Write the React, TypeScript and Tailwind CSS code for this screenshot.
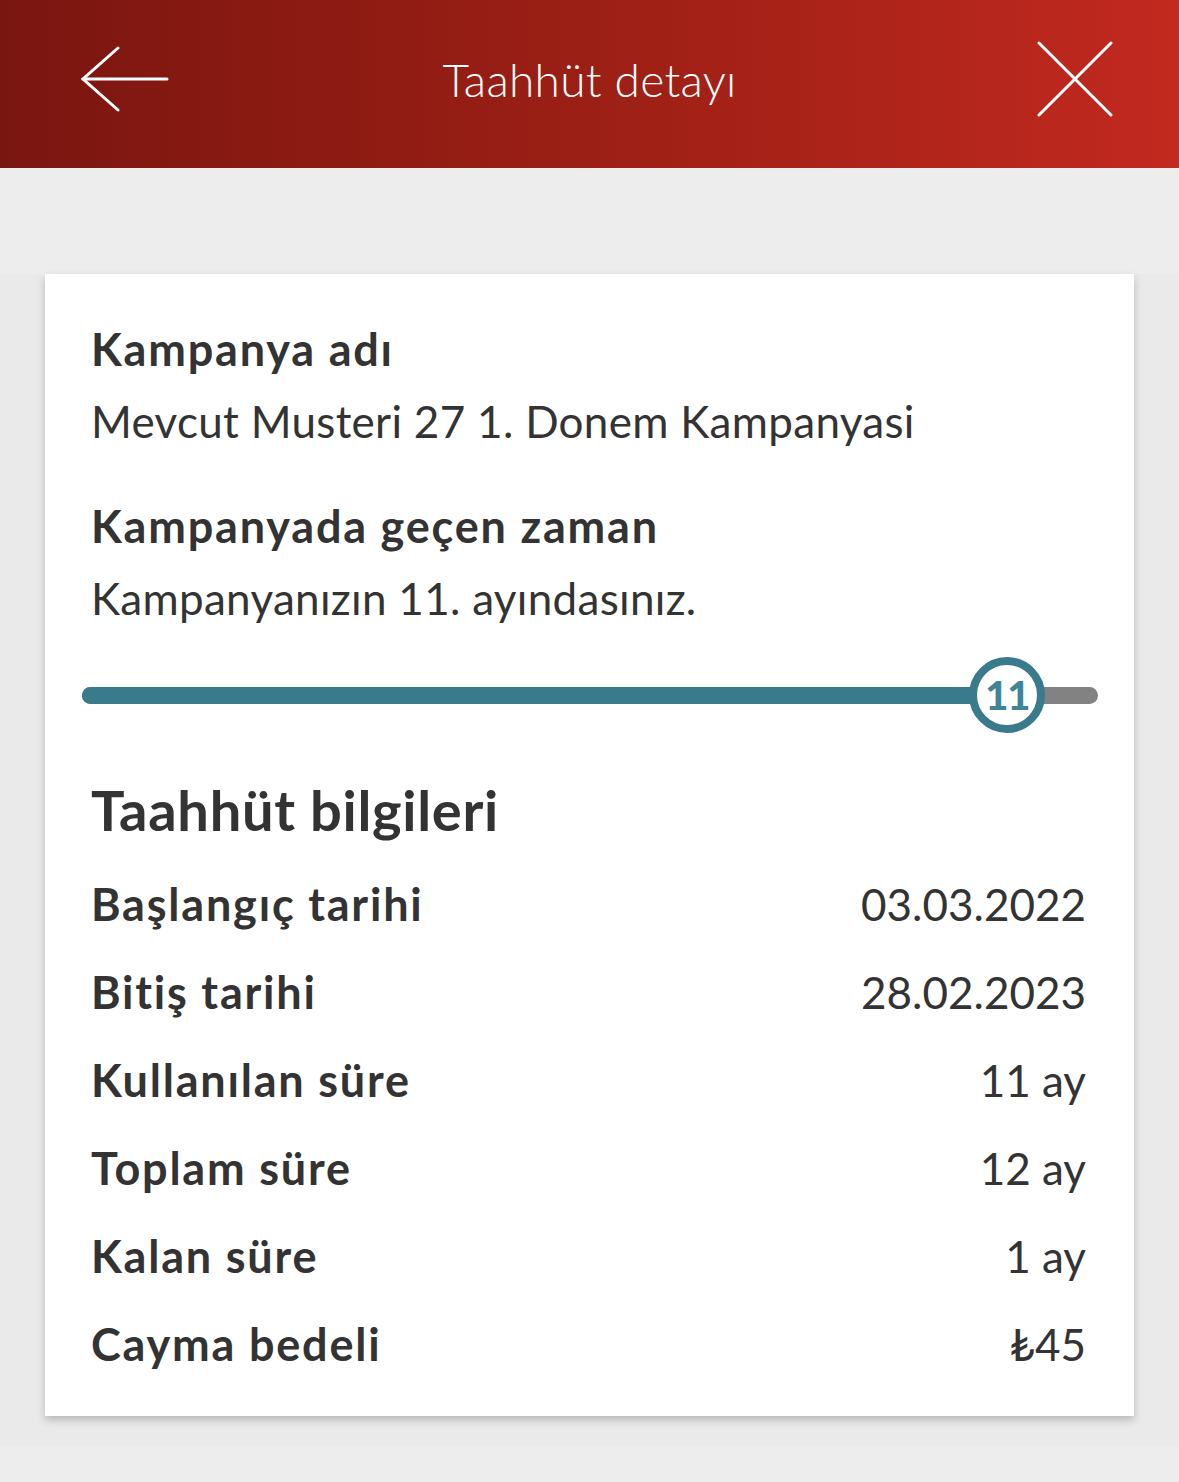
import { ReactNode } from "react";

const rows = [
  { label: "Başlangıç tarihi", value: "03.03.2022" },
  { label: "Bitiş tarihi", value: "28.02.2023" },
  { label: "Kullanılan süre", value: "11 ay" },
  { label: "Toplam süre", value: "12 ay" },
  { label: "Kalan süre", value: "1 ay" },
  { label: "Cayma bedeli", value: "₺45" },
];

const used = 11;
const total = 12;

function Label({ children, className = "" }: { children: ReactNode; className?: string }) {
  return (
    <div className={`h-[72px] text-[45px] leading-[72px] font-bold tracking-[1.8px] ${className}`}>{children}</div>
  );
}

function Value({ children }: { children: ReactNode }) {
  return <div className="h-[72px] text-[44px] leading-[72px] font-normal tracking-[0.3px]">{children}</div>;
}

function Progress() {
  const pct = (used / total) * 100;
  return (
    <div className="-ml-[9px] -mr-[12px] mt-[21px] h-[80px] flex items-center">
      <div className="relative w-full h-[17px] rounded-full bg-[#828282]">
        <div
          className="absolute left-0 top-0 h-full rounded-full bg-[#397a8c]"
          style={{ width: `calc(${pct}% - 6px)` }}
        />
        <div
          className="absolute top-1/2 -translate-x-1/2 -translate-y-1/2 w-[76px] h-[76px] rounded-full border-[8px] border-[#397a8c] bg-white flex items-center justify-center"
          style={{ left: `calc(${pct}% - 6px)` }}
        >
          <span className="text-[40px] font-black leading-none tracking-[-1px] text-[#3f8598]">{used}</span>
        </div>
      </div>
    </div>
  );
}

export default function App() {
  return (
    <div className="min-h-[1482px] bg-[#ededed] text-[#333333] font-['Lato','DejaVu_Sans',sans-serif]">
      <header className="h-[168px] bg-gradient-to-r from-[#7a1610] via-[#9c1f15] to-[#c2291f]">
        <div className="h-[158px] flex items-center justify-between px-[80px] pr-[66px] relative">
          <svg width="90" height="66" viewBox="0 0 90 66" fill="none" stroke="white" strokeWidth="3" strokeLinecap="round">
            <path d="M3 33 H87" />
            <path d="M38 2 L3 33 L38 64" />
          </svg>
          <h1 className="absolute left-1/2 -translate-x-1/2 text-white text-[46px] font-light tracking-[0.3px]">
            Taahhüt detayı
          </h1>
          <svg width="76" height="76" viewBox="0 0 76 76" fill="none" stroke="white" strokeWidth="3" strokeLinecap="round">
            <path d="M2 2 L74 74" />
            <path d="M74 2 L2 74" />
          </svg>
        </div>
      </header>

      <div className="h-[106px]" />

      <section className="bg-[#eaeaea] px-[45px] pb-[30px]">
        <div className="bg-white shadow-[0_4px_8px_rgba(0,0,0,0.22)] pl-[46px] pr-[48px] pt-[39px] pb-[28px]">
          <Label>Kampanya adı</Label>
          <Value>Mevcut Musteri 27 1. Donem Kampanyasi</Value>
          <Label className="mt-[33px]">Kampanyada geçen zaman</Label>
          <Value>Kampanyanızın 11. ayındasınız.</Value>

          <Progress />

          <h2 className="mt-[39px] h-[72px] text-[56px] leading-[72px] font-bold tracking-[0.7px]">Taahhüt bilgileri</h2>

          <div className="mt-[14px]">
            {rows.map((row) => (
              <div key={row.label} className="h-[88px] flex items-center justify-between leading-[88px]">
                <span className="text-[45px] font-bold tracking-[1.8px]">{row.label}</span>
                <span className="text-[44px] font-normal">{row.value}</span>
              </div>
            ))}
          </div>
        </div>
      </section>
    </div>
  );
}
